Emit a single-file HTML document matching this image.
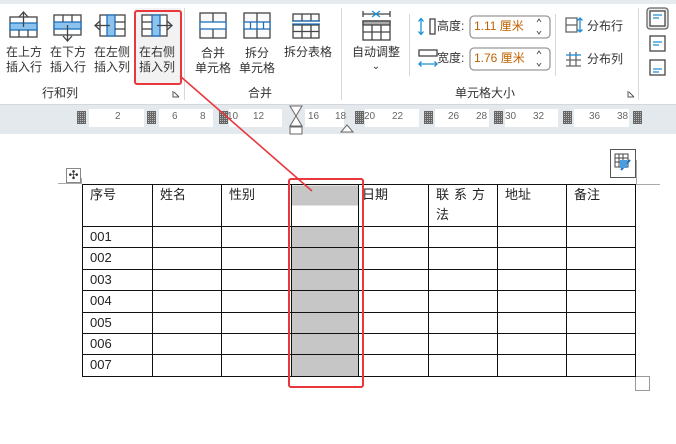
<!DOCTYPE html>
<html><head><meta charset="utf-8"><style>
*{margin:0;padding:0;box-sizing:border-box}
body{width:676px;height:444px;overflow:hidden;background:#fff;position:relative;font-family:"Liberation Sans","Noto Sans CJK SC",sans-serif;color:#222}
.a{position:absolute}
.t{position:absolute;font-size:12px;line-height:15px;text-align:center;color:#333}
.sep{position:absolute;width:1px;background:#d8d8d8}
.rw{position:absolute;top:109px;height:18px;background:#fff}
.rn{position:absolute;top:111px;font-size:10px;color:#666}
.gi{position:absolute;top:111px;width:9px;height:13px;background:repeating-linear-gradient(90deg,#666 0 1px,transparent 1px 2px),repeating-linear-gradient(0deg,#666 0 1px,#bbb 1px 2px)}
table{position:absolute;left:82px;top:184px;border-collapse:collapse;font-size:13px}
td{border:1.5px solid #111;padding:0 0 0 7px;vertical-align:top;height:21.4px;line-height:20px}
</style></head><body>
<div class="a" style="left:0;top:0;width:676px;height:4px;background:#e6ebef"></div>
<svg class="a" style="left:0;top:0" width="676" height="104">
<g fill="none" stroke="#444" stroke-width="1.3">
<rect x="10" y="17" width="27" height="20" fill="#fff"/><rect x="10" y="23" width="27" height="7" fill="#8cc3ee" stroke="#1d6fb8"/><line x1="19" y1="30" x2="19" y2="37"/><line x1="28" y1="30" x2="28" y2="37"/><line x1="23.5" y1="12" x2="23.5" y2="27"/><polyline points="19,17 23.5,12 28,17"/>
<rect x="54" y="15" width="27" height="20" fill="#fff"/><rect x="54" y="22" width="27" height="7" fill="#8cc3ee" stroke="#1d6fb8"/><line x1="63" y1="15" x2="63" y2="22"/><line x1="72" y1="15" x2="72" y2="22"/><line x1="67.5" y1="25" x2="67.5" y2="41"/><polyline points="63,36 67.5,41 72,36"/>
<rect x="100" y="15" width="25" height="21" fill="#fff"/><rect x="107" y="15" width="8" height="21" fill="#8cc3ee" stroke="#1d6fb8"/><line x1="115" y1="22" x2="125" y2="22"/><line x1="115" y1="29" x2="125" y2="29"/><line x1="95" y1="25.5" x2="110" y2="25.5"/><polyline points="100,21 95,25.5 100,30"/>
<rect x="142" y="15" width="25" height="21" fill="#fff"/><rect x="152" y="15" width="8" height="21" fill="#8cc3ee" stroke="#1d6fb8"/><line x1="142" y1="22" x2="152" y2="22"/><line x1="142" y1="29" x2="152" y2="29"/><line x1="157" y1="25.5" x2="172" y2="25.5"/><polyline points="167,21 172,25.5 167,30"/>
<rect x="200" y="13" width="26" height="25" fill="#fafafa"/><line x1="213" y1="13" x2="213" y2="22"/><line x1="213" y1="29" x2="213" y2="38"/><rect x="200" y="22" width="26" height="7" fill="#fff" stroke="#1d6fb8"/>
<rect x="244" y="13" width="26" height="25" fill="#fafafa"/><line x1="257" y1="13" x2="257" y2="22"/><line x1="257" y1="29" x2="257" y2="38"/><rect x="244" y="22" width="26" height="7" fill="#fff" stroke="#1d6fb8"/><line x1="250.5" y1="22" x2="250.5" y2="29" stroke="#1d6fb8"/><line x1="257" y1="22" x2="257" y2="29" stroke="#1d6fb8"/><line x1="263.5" y1="22" x2="263.5" y2="29" stroke="#1d6fb8"/>
<rect x="293" y="14" width="26" height="7" fill="#fafafa"/><line x1="302" y1="14" x2="302" y2="21"/><line x1="311" y1="14" x2="311" y2="21"/><line x1="292" y1="21" x2="320" y2="21" stroke="#1d6fb8"/><rect x="293" y="25" width="26" height="13" fill="#fafafa"/><line x1="302" y1="25" x2="302" y2="38"/><line x1="311" y1="25" x2="311" y2="38"/><line x1="293" y1="31.5" x2="319" y2="31.5"/><line x1="292" y1="24" x2="320" y2="24" stroke="#1d6fb8"/>
<line x1="363" y1="14" x2="390" y2="14"/><line x1="363" y1="11" x2="363" y2="17"/><line x1="390" y1="11" x2="390" y2="17"/><path d="M372 11 l8 6 M380 11 l-8 6" stroke="#1d8fd8"/>
<rect x="363" y="21" width="27" height="19" fill="#fff"/><rect x="363" y="21" width="27" height="4" fill="#aaa"/><line x1="372" y1="25" x2="372" y2="40"/><line x1="381" y1="25" x2="381" y2="40"/><line x1="363" y1="32" x2="390" y2="32"/>
<rect x="430" y="19" width="5" height="15"/><path d="M421 19 v15 M418.5 21.5 l2.5-3 2.5 3 M418.5 31.5 l2.5 3 2.5-3" stroke="#1d8fd8"/>
<rect x="419" y="50" width="18" height="6"/><path d="M419 64 h18 M421.5 61.5 l-2.5 2.5 2.5 2.5 M434.5 61.5 l2.5 2.5-2.5 2.5" stroke="#1d8fd8"/>
<rect x="470" y="16" width="80" height="22" rx="4" stroke="#999" fill="#fff"/>
<rect x="470" y="48" width="80" height="22" rx="4" stroke="#999" fill="#fff"/>
<path d="M537 22 l2-3 2 3 M537 31 l2 3 2-3 M537 54 l2-3 2 3 M537 63 l2 3 2-3" stroke="#555" stroke-width="1"/>
<rect x="566" y="18" width="11" height="14" stroke="#666"/><line x1="566" y1="25" x2="577" y2="25" stroke="#666"/><path d="M580 18v14 M577.5 20.5l2.5-2.5 2.5 2.5 M577.5 29.5l2.5 2.5 2.5-2.5" stroke="#1d8fd8"/>
<path d="M570 52 v14 M576 52 v14 M566 60 h15 M566 66 h15" stroke="#666"/><path d="M566 55 h15" stroke="#1d8fd8"/>
<rect x="647" y="8" width="21" height="21" rx="3" stroke="#666" fill="#eee"/><rect x="650" y="11" width="15" height="15" stroke="#444" fill="#fff"/><path d="M653 15h9 M653 18h6" stroke="#1d8fd8"/>
<rect x="650" y="36" width="15" height="15" stroke="#444" fill="#fff"/><path d="M653 42h9 M653 45h6" stroke="#1d8fd8"/>
<rect x="650" y="60" width="15" height="15" stroke="#444" fill="#fff"/><path d="M653 69h9 M653 72h6" stroke="#1d8fd8"/>
<path d="M173 91 v6 h6 M174 92 l5 5" stroke="#555" stroke-width="1"/>
<path d="M628 91 v6 h6 M629 92 l5 5" stroke="#555" stroke-width="1"/>
</g>
</svg>
<div class="a" style="left:134px;top:8px;width:48px;height:77px;background:#f2f2f2;border-radius:3px;z-index:-1"></div>
<div class="t" style="left:2px;top:45px;width:44px">在上方<br>插入行</div>
<div class="t" style="left:46px;top:45px;width:44px">在下方<br>插入行</div>
<div class="t" style="left:90px;top:45px;width:44px">在左侧<br>插入列</div>
<div class="t" style="left:135px;top:45px;width:44px">在右侧<br>插入列</div>
<div class="t" style="left:191px;top:46px;width:44px">合并<br>单元格</div>
<div class="t" style="left:235px;top:46px;width:44px">拆分<br>单元格</div>
<div class="t" style="left:280px;top:45px;width:56px">拆分表格</div>
<div class="t" style="left:346px;top:45px;width:60px">自动调整</div>
<div class="t" style="left:370px;top:59px;width:12px;font-size:10px">⌄</div>
<div class="t" style="left:437px;top:19px;text-align:left">高度:</div>
<div class="t" style="left:437px;top:51px;text-align:left">宽度:</div>
<div class="t" style="left:474px;top:19px;text-align:left;color:#c06000">1.11 厘米</div>
<div class="t" style="left:474px;top:51px;text-align:left;color:#c06000">1.76 厘米</div>
<div class="t" style="left:587px;top:19px;text-align:left">分布行</div>
<div class="t" style="left:587px;top:52px;text-align:left">分布列</div>
<div class="t" style="left:30px;top:86px;width:60px">行和列</div>
<div class="t" style="left:240px;top:86px;width:40px">合并</div>
<div class="t" style="left:445px;top:86px;width:80px">单元格大小</div>
<div class="sep" style="left:184px;top:8px;height:92px"></div>
<div class="sep" style="left:341px;top:8px;height:92px"></div>
<div class="sep" style="left:409px;top:14px;height:62px"></div>
<div class="sep" style="left:555px;top:14px;height:62px"></div>
<div class="sep" style="left:638px;top:8px;height:92px"></div>
<div class="a" style="left:0;top:104px;width:676px;height:30px;background:#e4e9ed;border-top:1px solid #d4d8dc"></div>
<div class="rw" style="left:89px;width:55px"></div><div class="rw" style="left:159px;width:54px"></div><div class="rw" style="left:229px;width:53px"></div><div class="rw" style="left:305px;width:39px"></div><div class="rw" style="left:365px;width:54px"></div><div class="rw" style="left:435px;width:54px"></div><div class="rw" style="left:505px;width:53px"></div><div class="rw" style="left:574px;width:55px"></div>
<div class="gi" style="left:77px"></div><div class="gi" style="left:147px"></div><div class="gi" style="left:219px"></div><div class="gi" style="left:355px"></div><div class="gi" style="left:424px"></div><div class="gi" style="left:494px"></div><div class="gi" style="left:563px"></div><div class="gi" style="left:633px"></div>
<div class="rn" style="left:115px">2</div><div class="rn" style="left:172px">6</div><div class="rn" style="left:200px">8</div><div class="rn" style="left:227px">10</div><div class="rn" style="left:253px">12</div><div class="rn" style="left:308px">16</div><div class="rn" style="left:335px">18</div><div class="rn" style="left:364px">20</div><div class="rn" style="left:392px">22</div><div class="rn" style="left:448px">26</div><div class="rn" style="left:476px">28</div><div class="rn" style="left:505px">30</div><div class="rn" style="left:533px">32</div><div class="rn" style="left:589px">36</div><div class="rn" style="left:617px">38</div>
<svg class="a" style="left:288px;top:105px" width="16" height="30"><path d="M2 1h12l-6 10 6 10H2l6-10z M2 22h12v7H2z" fill="#fff" stroke="#666"/></svg>
<svg class="a" style="left:340px;top:120px" width="14" height="14"><path d="M1 12 L7 5 L13 12 Z" fill="#fff" stroke="#666"/></svg>
<div class="a" style="left:81px;top:178px;width:1px;height:6px;background:#aaa"></div>
<div class="a" style="left:66px;top:168px;width:15px;height:15px;border:1px solid #888;font-size:12px;line-height:12px;text-align:center;color:#333">✣</div>
<div class="a" style="left:58px;top:183px;width:24px;height:1px;background:#aaa"></div>
<div class="a" style="left:610px;top:149px;width:26px;height:29px;border:1px solid #555;background:#fff"></div>
<svg class="a" style="left:613px;top:152px" width="20" height="22"><g fill="none" stroke="#444" stroke-width="1"><rect x="2" y="2" width="13" height="13"/><path d="M6 2v13 M10 2v13 M2 6h13 M2 10h13"/><path d="M8 18 l9-10" stroke="#1d6fb8" stroke-width="2"/></g><rect x="7" y="8" width="7" height="8" fill="#4a9ee0"/></svg>
<div class="a" style="left:636px;top:160px;width:1px;height:24px;background:#aaa"></div>
<div class="a" style="left:636px;top:184px;width:24px;height:1px;background:#aaa"></div>
<div class="a" style="left:635px;top:376px;width:15px;height:15px;border:1px solid #999"></div>
<table>
<tr style="height:42px"><td style="width:70px">序号</td><td style="width:69px">姓名</td><td style="width:70px">性别</td><td style="width:67px;padding:0;background:linear-gradient(#c6c6c6 0 20px,#fff 20px)"></td><td style="width:70px;padding-left:3px">日期</td><td style="width:69px;letter-spacing:5px">联系方法</td><td style="width:69px">地址</td><td style="width:69px">备注</td></tr>
<tr><td>001</td><td></td><td></td><td style="background:#c6c6c6"></td><td></td><td></td><td></td><td></td></tr>
<tr><td>002</td><td></td><td></td><td style="background:#c6c6c6"></td><td></td><td></td><td></td><td></td></tr>
<tr><td>003</td><td></td><td></td><td style="background:#c6c6c6"></td><td></td><td></td><td></td><td></td></tr>
<tr><td>004</td><td></td><td></td><td style="background:#c6c6c6"></td><td></td><td></td><td></td><td></td></tr>
<tr><td>005</td><td></td><td></td><td style="background:#c6c6c6"></td><td></td><td></td><td></td><td></td></tr>
<tr><td>006</td><td></td><td></td><td style="background:#c6c6c6"></td><td></td><td></td><td></td><td></td></tr>
<tr><td>007</td><td></td><td></td><td style="background:#c6c6c6"></td><td></td><td></td><td></td><td></td></tr>
</table>
<div class="a" style="left:134px;top:10px;width:48px;height:75px;border:2px solid #e8383d;border-radius:3px"></div>
<div class="a" style="left:288px;top:178px;width:76px;height:210px;border:2px solid #e8383d;border-radius:3px"></div>
<svg class="a" style="left:0;top:0" width="676" height="444"><line x1="180" y1="76" x2="312" y2="191" stroke="#e8383d" stroke-width="1.6"/></svg>
</body></html>
